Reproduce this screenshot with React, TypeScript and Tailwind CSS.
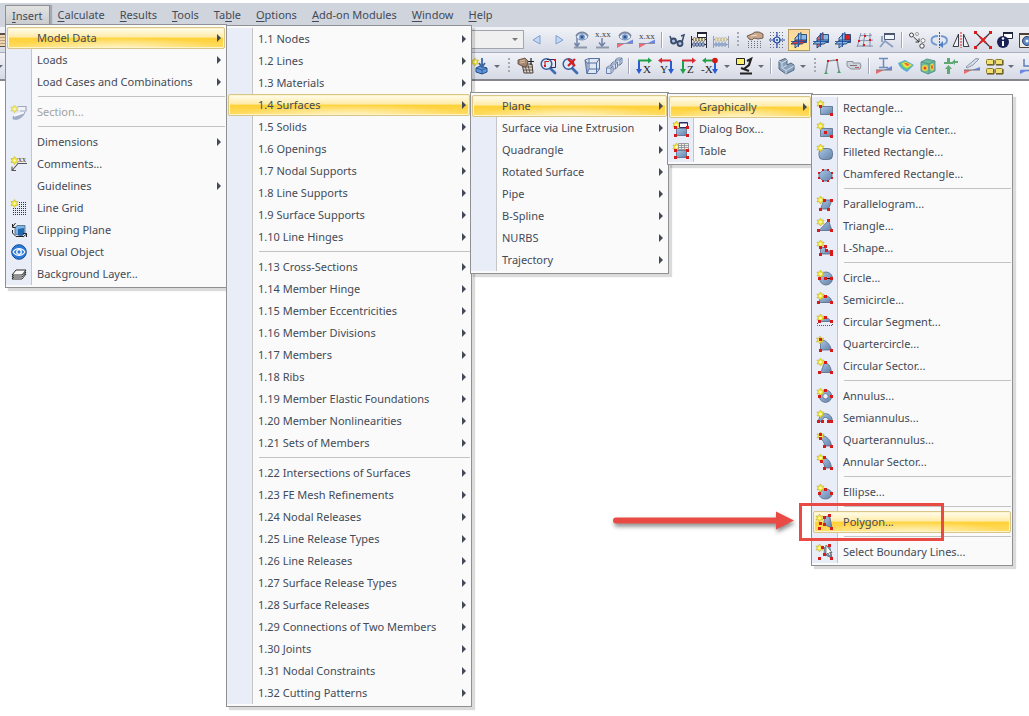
import React from "react";

const Star = ({ x = 4, y = 4 }: { x?: number; y?: number }) => (
  <g transform={`translate(${x} ${y})`}>
    <path
      d="M0 -4L1.2 -1.8L3.6 -2L2.2 0L3.6 2L1.2 1.8L0 4L-1.2 1.8L-3.6 2L-2.2 0L-3.6 -2L-1.2 -1.8Z"
      fill="#f7ee3a"
      stroke="#b8aa34"
      strokeWidth="0.6"
    />
    <circle r="1.1" fill="#fffbd0" />
  </g>
);

const Dots = ({ at, size = 3 }: { at: number[][]; size?: number }) => (
  <>
    {at.map(([x, y]) => (
      <rect key={`${x}-${y}`} x={Math.round(x - size / 2)} y={Math.round(y - size / 2)} width={size} height={size} fill="#d81a1a" />
    ))}
  </>
);

type Shape = { d: string; dots?: number[][]; star?: number[] | null; extra?: React.ReactNode };

const shapes: Record<string, Shape> = {
  rectangle: { d: "M3.5 6.5H15.5V14.5H3.5Z", dots: [[3.5, 6.5], [14.5, 14.5]] },
  rectCenter: { d: "M3.5 6.5H15.5V14.5H3.5Z", dots: [[8.5, 10.5], [14.5, 14.5]] },
  filleted: { d: "M6 4.5H11.5Q15.5 4.5 15.5 8.5V11.5Q15.5 15.5 11.5 15.5H6Q2 15.5 2 11.5V8.5Q2 4.5 6 4.5Z" },
  chamfered: {
    d: "M6 4H11L15 8V11L11 15H6L2 11V8Z",
    star: null,
    extra: <Dots size={2} at={[[6, 4], [11, 4], [15, 7], [15, 12], [11, 15], [6, 15], [2, 12], [2, 7]]} />,
  },
  parallelogram: { d: "M7 4H15L11.5 13H3.5Z", dots: [[7.5, 4.5], [14.5, 4.5], [3.5, 13.5], [11.5, 13.5]] },
  triangle: { d: "M11.5 2.5L15 12.5H2Z", dots: [[11.5, 2.5], [1.5, 12.5], [14.5, 12.5]] },
  lshape: { d: "M3.5 7.5H8.5V11H14.5V14H3.5Z", dots: [[3.5, 7.5], [8.5, 6.5], [9.5, 10.5], [14.5, 11.5], [3.5, 14.5], [14.5, 14.5]] },
  circle: {
    d: "M9 2A6.5 6.5 0 1 1 9 15A6.5 6.5 0 1 1 9 2Z",
    extra: <path d="M9 8.5H14" stroke="#111" strokeWidth="1" />,
    dots: [[2.5, 8.5], [8.5, 8.5], [14.5, 8.5]],
  },
  semicircle: { d: "M2 10.5A6.5 6.5 0 0 1 15 10.5Z", dots: [[1.5, 10.5], [8.5, 4.5], [14.5, 10.5]] },
  segment: {
    d: "M2.5 7.5Q8.5 0 14.5 7.5Z",
    dots: [[2.5, 7.5], [8.5, 3.5], [14.5, 7.5]],
    extra: <path d="M0.5 9V11.5H15.5V9" fill="none" stroke="#555" strokeDasharray="1 1" />,
  },
  quarter: { d: "M3.5 3.5C9 4 13 8 14.5 14H3.5Z", dots: [[3.5, 3.5], [3.5, 14.5], [14.5, 14.5]], star: [3, 4] },
  sector: { d: "M8.5 4.5C12 6 14 9 14.5 14.5H3C6 12 5 7 8.5 4.5Z", dots: [[8.5, 4.5], [2.5, 14.5], [14.5, 14.5]] },
  annulus: {
    d: "M8.5 2A6.2 6.2 0 1 1 8.5 14.4A6.2 6.2 0 1 1 8.5 2ZM8.5 5.5A2.7 2.7 0 1 0 8.5 11A2.7 2.7 0 1 0 8.5 5.5Z",
    dots: [[8.5, 2.5], [2.5, 8.5], [14.5, 8.5]],
  },
  semiannulus: { d: "M1.5 11.5C2 1 15 1 15.5 11.5H12C11 6 6 6 5 11.5Z", dots: [[1.5, 11.5], [5.5, 11.5], [11.5, 11.5], [14.5, 11.5]] },
  quarterannulus: { d: "M3.5 3C10 4 14 8 14.5 14H7.5C7.5 10 5.5 8 3.5 6.5Z", dots: [[3.5, 2.5], [3.5, 6.5], [7.5, 14.5], [14.5, 14.5]] },
  annularSector: { d: "M7.5 3.5C12 5 14 9 14.5 14H7.5C8 11 6.5 9 4.5 7.5Z", dots: [[7.5, 3.5], [4.5, 7.5], [7.5, 14.5], [14.5, 14.5]] },
  ellipse: { d: "M8.5 5A6.5 5 0 1 1 8.5 15A6.5 5 0 1 1 8.5 5Z", dots: [[2.5, 9.5], [8.5, 5.5], [14.5, 9.5]] },
  polygon: { d: "M7.5 3.5L12.5 1.5L15 14L7 10.5Z", star: [2.5, 4], dots: [[7.5, 3.5], [12.5, 1.5], [14.5, 14.5], [7.5, 10.5], [2.5, 14.5], [3.5, 9.5]] },
  boundary: {
    d: "M7.5 3.5L12.5 1.5L15 14L7 10.5Z",
    star: [2.5, 4],
    dots: [[5.5, 3.5], [12.5, 1.5], [14.5, 14.5], [7.5, 10.5], [2.5, 14.5]],
    extra: <path d="M9 1V11L11 9L12.5 12L14 11L12.5 8.5H15Z" fill="#fff" stroke="#555" strokeWidth="0.7" />,
  },
  dialog: {
    d: "M3.5 7.5H13.5V14.5H3.5Z",
    dots: [[2.5, 6.5], [14.5, 6.5], [2.5, 14.5], [14.5, 14.5]],
    extra: <path d="M6.5 1.5H14.5V6.5H6.5ZM6.5 2H14.5" fill="#fff" stroke="#2b2f66" />,
  },
  table: {
    d: "M3.5 7.5H13.5V14.5H3.5Z",
    dots: [[2.5, 7.5], [14.5, 7.5], [2.5, 14.5], [14.5, 14.5]],
    extra: <path d="M5.5 0.5H15.5V6.5H5.5ZM5.5 2.5H15.5M5.5 4.5H15.5M8.5 0.5V6.5M11.5 0.5V6.5" fill="#eee" stroke="#8a8a8a" strokeWidth="0.8" />,
  },
};

const drawings: Record<string, React.ReactNode> = {
  section: (
    <g opacity="0.75">
      <path d="M7 2.5H15V7H9" fill="#f4f6fb" stroke="#8b92a8" strokeWidth="1.2" />
      <path d="M2 12.5L8 11.5L14 8C13 12 9 15 5 15.5L2 15Z" fill="#8d9cbd" stroke="#6e7d9f" strokeWidth="0.6" />
      <path d="M3 12L13 8.5" stroke="#fff" strokeWidth="1.5" />
      <Star x={3.5} y={5} />
    </g>
  ),
  comments: (
    <>
      <text x="7" y="6" fontSize="8" fontFamily="Liberation Serif, serif" fill="#333">xx</text>
      <path d="M16 7.5H7L1.5 14M1 10.5V14.5H5" fill="none" stroke="#555" strokeWidth="1.1" />
      <Star x={3.5} y={4.5} />
    </>
  ),
  grid: (
    <>
      {[2.5, 4.5, 6.5, 8.5, 10.5, 12.5, 14.5].map((y) => (
        <path key={y} d={y < 8 ? `M8 ${y}H15` : `M2 ${y}H15`} stroke="#333" strokeDasharray="1 1" />
      ))}
      <Star x={3.5} y={3.5} />
    </>
  ),
  clipping: (
    <>
      <path d="M4 6L6 3.5H14V11L11 14L4 12Z" fill="#7db4e4" stroke="#4a6580" strokeWidth="0.8" />
      <path d="M7 7L13 6V12L10 14L7 13Z" fill="#2368ae" />
      <path d="M1.5 5L4.5 1M1.5 2V5.5H4.5M1.5 8V11L5 14.5H12M12 15L15.5 12M12 11.5H15.5V15" fill="none" stroke="#222" strokeWidth="1" />
    </>
  ),
  visual: (
    <>
      <circle cx="8" cy="8" r="7.3" fill="#2a7bd8" stroke="#134c9a" />
      <path d="M2 8C5 3.5 11 3.5 14 8C11 12.5 5 12.5 2 8Z" fill="none" stroke="#fff" strokeWidth="1.2" />
      <circle cx="8" cy="8" r="2.3" fill="none" stroke="#fff" strokeWidth="1.3" />
    </>
  ),
  layers: (
    <>
      {[13, 11, 9].map((y) => (
        <path key={y} d={`M1 ${y}L5 ${y - 5}H15L11 ${y}Z`} fill="#fafafa" stroke="#2c2c2c" strokeWidth="1" />
      ))}
    </>
  ),
};

const MenuIcon = ({ name }: { name: string }) => {
  const shape = shapes[name];
  return (
    <svg viewBox="0 0 16 16" className="size-4 shrink-0 overflow-visible" aria-hidden="true">
      <defs>
        <linearGradient id="steel" x1="0" y1="0" x2="1" y2="1">
          <stop offset="0" stopColor="#a9c6ea" />
          <stop offset="1" stopColor="#6482a6" />
        </linearGradient>
      </defs>
      {shape ? (
        <>
          <path d={shape.d} fill="url(#steel)" fillRule="evenodd" stroke="#536a86" strokeWidth="0.8" />
          {shape.star !== null && <Star x={shape.star?.[0] ?? 3.5} y={shape.star?.[1] ?? 4} />}
          {shape.extra}
          <Dots at={shape.dots ?? []} />
        </>
      ) : (
        drawings[name]
      )}
    </svg>
  );
};

type Item = {
  label: string;
  icon?: string;
  disabled?: boolean;
  arrow?: boolean;
  active?: boolean;
  submenu?: React.ReactNode;
  marked?: boolean;
};
type Entry = Item | "-";

const Callout = () => (
  <>
    <div className="pointer-events-none absolute -top-2 -left-3.5 h-[38px] w-[145px] border-3 border-[#ea4a44]" />
    <svg viewBox="0 0 186 30" className="pointer-events-none absolute -top-1 right-full mr-4 h-[30px] w-[186px] drop-shadow-[1px_3px_2px_rgba(0,0,0,0.45)]" aria-hidden="true">
      <path d="M5 13.5H168" stroke="#ea4a44" strokeWidth="6" strokeLinecap="round" />
      <path d="M165 4.5L183 13.5L165 22.5Z" fill="#ea4a44" />
    </svg>
  </>
);

const MenuRow = ({ item }: { item: Item }) => (
  <li className="relative" role="none">
    <button
      type="button"
      role="menuitem"
      disabled={item.disabled}
      className={`flex h-[22px] w-full items-center rounded-xs border pl-[3px] text-left ${
        item.active
          ? "border-[#d8c58a] bg-[radial-gradient(ellipse_48%_52%_at_50%_100%,#fff3c2,rgba(255,243,194,0)),linear-gradient(#fffdf0,#ffeba6_46%,#ffd136_50%,#ffdc66)] shadow-[inset_0_0_0_1px_#fff3c8]"
          : "border-transparent"
      } ${item.disabled ? "text-[#a0a0a0]" : "text-[#434a57]"}`}
    >
      {item.icon ? <MenuIcon name={item.icon} /> : <span className="w-4 shrink-0" />}
      <span className="ml-2.5 flex-1 whitespace-nowrap">{item.label}</span>
      {item.arrow && (
        <svg viewBox="0 0 4 8" className="mr-[3px] h-2 w-1" aria-hidden="true">
          <path d="M0 0L4 4L0 8Z" fill="#434a57" />
        </svg>
      )}
    </button>
    {item.submenu}
    {item.marked && <Callout />}
  </li>
);

const Menu = ({ entries, className, label }: { entries: Entry[]; className: string; label: string }) => (
  <div className={`absolute z-10 border border-[#8e9093] bg-[#fafafa] py-0.5 shadow-[3px_3px_1px_rgba(0,0,0,0.14)] ${className}`}>
    <ul role="menu" aria-label={label} className="bg-[linear-gradient(to_right,#e9edf7_25px,#c5c5c5_25px,#c5c5c5_26px,#fafafa_26px)] px-px">
      {entries.map((entry, i) =>
        entry === "-" ? (
          <li key={i} role="separator" className="h-2 pt-[3px] pl-[31px]">
            <span className="block h-px bg-[#c2c2c2]" />
          </li>
        ) : (
          <MenuRow key={i} item={entry} />
        )
      )}
    </ul>
  </div>
);

const sub = (labels: string[]): Item[] => labels.map((label) => ({ label, arrow: true }));

const graphicalEntries: Entry[] = [
  { label: "Rectangle...", icon: "rectangle" },
  { label: "Rectangle via Center...", icon: "rectCenter" },
  { label: "Filleted Rectangle...", icon: "filleted" },
  { label: "Chamfered Rectangle...", icon: "chamfered" },
  "-",
  { label: "Parallelogram...", icon: "parallelogram" },
  { label: "Triangle...", icon: "triangle" },
  { label: "L-Shape...", icon: "lshape" },
  "-",
  { label: "Circle...", icon: "circle" },
  { label: "Semicircle...", icon: "semicircle" },
  { label: "Circular Segment...", icon: "segment" },
  { label: "Quartercircle...", icon: "quarter" },
  { label: "Circular Sector...", icon: "sector" },
  "-",
  { label: "Annulus...", icon: "annulus" },
  { label: "Semiannulus...", icon: "semiannulus" },
  { label: "Quarterannulus...", icon: "quarterannulus" },
  { label: "Annular Sector...", icon: "annularSector" },
  "-",
  { label: "Ellipse...", icon: "ellipse" },
  "-",
  { label: "Polygon...", icon: "polygon", active: true, marked: true },
  "-",
  { label: "Select Boundary Lines...", icon: "boundary" },
];

const planeEntries: Entry[] = [
  {
    label: "Graphically",
    arrow: true,
    active: true,
    submenu: <Menu label="Graphically" entries={graphicalEntries} className="-top-0.5 left-full w-[202px]" />,
  },
  { label: "Dialog Box...", icon: "dialog" },
  { label: "Table", icon: "table" },
];

const surfaceEntries: Entry[] = [
  {
    label: "Plane",
    arrow: true,
    active: true,
    submenu: <Menu label="Plane" entries={planeEntries} className="-top-0.5 left-full w-[146px]" />,
  },
  ...sub(["Surface via Line Extrusion", "Quadrangle", "Rotated Surface", "Pipe", "B-Spline", "NURBS", "Trajectory"]),
];

const modelEntries: Entry[] = [
  ...sub(["1.1 Nodes", "1.2 Lines", "1.3 Materials"]),
  {
    label: "1.4 Surfaces",
    arrow: true,
    active: true,
    submenu: <Menu label="Surfaces" entries={surfaceEntries} className="-top-0.5 left-full w-[199px]" />,
  },
  ...sub(["1.5 Solids", "1.6 Openings", "1.7 Nodal Supports", "1.8 Line Supports", "1.9 Surface Supports", "1.10 Line Hinges"]),
  "-",
  ...sub([
    "1.13 Cross-Sections",
    "1.14 Member Hinge",
    "1.15 Member Eccentricities",
    "1.16 Member Divisions",
    "1.17 Members",
    "1.18 Ribs",
    "1.19 Member Elastic Foundations",
    "1.20 Member Nonlinearities",
    "1.21 Sets of Members",
  ]),
  "-",
  ...sub([
    "1.22 Intersections of Surfaces",
    "1.23 FE Mesh Refinements",
    "1.24 Nodal Releases",
    "1.25 Line Release Types",
    "1.26 Line Releases",
    "1.27 Surface Release Types",
    "1.28 Surface Releases",
    "1.29 Connections of Two Members",
    "1.30 Joints",
    "1.31 Nodal Constraints",
    "1.32 Cutting Patterns",
  ]),
];

const insertEntries: Entry[] = [
  {
    label: "Model Data",
    arrow: true,
    active: true,
    submenu: <Menu label="Model Data" entries={modelEntries} className="-top-0.5 left-full ml-px w-[246px]" />,
  },
  ...sub(["Loads", "Load Cases and Combinations"]),
  "-",
  { label: "Section...", icon: "section", disabled: true },
  "-",
  { label: "Dimensions", arrow: true },
  { label: "Comments...", icon: "comments" },
  { label: "Guidelines", arrow: true },
  { label: "Line Grid", icon: "grid" },
  { label: "Clipping Plane", icon: "clipping" },
  { label: "Visual Object", icon: "visual" },
  { label: "Background Layer...", icon: "layers" },
];

// [text before the access key, access key, rest]
const menuBar = [
  ["", "C", "alculate"],
  ["", "R", "esults"],
  ["", "T", "ools"],
  ["Ta", "b", "le"],
  ["", "O", "ptions"],
  ["", "A", "dd-on Modules"],
  ["", "W", "indow"],
  ["", "H", "elp"],
];

// Toolbar drawings on an 18 x 18 grid
const Eye = ({ x, y }: { x: number; y: number }) => (
  <g transform={`translate(${x} ${y})`}>
    <path d="M-6 0C-3 -5 3 -5 6 0C3 4 -3 4 -6 0Z" fill="#e6edf6" stroke="#8795ae" />
    <path d="M-6 -1C-3 -6 3 -6 6 -1" fill="none" stroke="#7a87a0" strokeWidth="1.5" />
    <circle r="2.8" fill="#5c86c4" />
    <circle r="1" fill="#27406e" />
  </g>
);

const Wedge = () => (
  <>
    <path d="M1 17V12.5H9Z" fill="#ee6a72" />
    <path d="M17 8.5V12.5H9Z" fill="#6c86e6" />
    <path d="M1 12.5H17" stroke="#8c8fa3" />
  </>
);

const Abacus = () => (
  <>
    <path d="M1.5 5V17M16.5 5V17" stroke="currentColor" strokeWidth="1" />
    <path d="M2 8.5H16M2 13.5H16" stroke="currentColor" />
    {[4, 7, 10, 13].map((x) => (
      <g key={x} fill="#8fabd8" stroke="currentColor" strokeWidth="0.5">
        <ellipse cx={x + 0.5} cy="8.5" rx="1.5" ry="2" fill="#efe2a4" />
        <ellipse cx={x} cy="13.5" rx="1.5" ry="2" />
      </g>
    ))}
  </>
);

const GridDots = ({ rows }: { rows: number[] }) => (
  <>
    {rows.map((y) => (
      <path key={y} d={`M2 ${y}.5H17`} stroke="#6c7380" strokeDasharray="1 2" />
    ))}
  </>
);

const Planes = ({ fills }: { fills: string[] }) => (
  <g stroke="#1d4474" strokeWidth="0.9">
    <path d="M8 3.5H16.5V11.5H8Z" fill={fills[0]} />
    <path d="M5 7L11 1.5V12L5 17Z" fill={fills[1]} fillOpacity="0.85" />
    <path d="M1 13L6 9H17L12 13Z" fill={fills[2]} fillOpacity="0.9" />
    <path d="M8.5 2V16M1 10.5H17" stroke="#1b4fa0" />
  </g>
);

const Axis = ({ letter, color, turn, side }: { letter: string; color: string; turn?: boolean; side: string }) => (
  <>
    <path d={turn ? "M4 3.5H14" : "M3 3.5H14"} stroke={color} strokeWidth="2" />
    <path d={turn ? "M5 0.5L1 3.5L5 6.5" : "M13 0.5L17 3.5L13 6.5"} fill={color} />
    <path d={turn ? "M14 4V14" : "M4 4V14"} stroke={side} strokeWidth="2" />
    <path d={turn ? "M11 12H17L14 17Z" : "M1 12H7L4 17Z"} fill={side} />
    <text x={turn ? (letter.length > 1 ? 0 : 3) : 8} y="16" fontSize="11" fontFamily="Liberation Serif, serif" fill="#1c1c28">
      {letter}
    </text>
  </>
);

const Lens = () => (
  <>
    <path d="M11 11L16 16" stroke="#3f6cb4" strokeWidth="2.8" strokeLinecap="round" />
    <circle cx="7.5" cy="7" r="5.3" fill="#dcebfb" stroke="#3b5c9a" strokeWidth="1.5" />
  </>
);

const windowTiles = [[1, 2], [10, 2], [1, 11], [10, 11]];

const tools: Record<string, React.ReactNode> = {
  Back: <path d="M12 4.5V13L5 9Z" fill="#c3d8f3" stroke="#7d9fd0" />,
  Forward: <path d="M6 4.5V13L13 9Z" fill="#c3d8f3" stroke="#7d9fd0" />,
  "Show loads": (
    <>
      <path d="M5 5V15M2.5 12L5 15.5L7.5 12" fill="none" stroke="#6f82a8" strokeWidth="1.5" />
      <path d="M2 16.5H15" stroke="#8f98ab" strokeWidth="2" />
      <Eye x={10} y={6} />
    </>
  ),
  "Load values": (
    <>
      <text x="1" y="6" fontSize="9" fontFamily="Liberation Serif, serif" fill="#3c4049">x.xx</text>
      <path d="M8 7V14M5 11.5L8 15L11 11.5" fill="none" stroke="#6f82a8" strokeWidth="1.5" />
      <path d="M2 16.5H15" stroke="#8f98ab" strokeWidth="2" />
    </>
  ),
  "Show results": <><Wedge /><Eye x={9} y={6} /></>,
  "Result values": (
    <>
      <Wedge />
      <text x="1" y="8" fontSize="9" fontFamily="Liberation Serif, serif" fill="#3c4049">x.xx</text>
    </>
  ),
  Glasses: (
    <>
      <circle cx="5.5" cy="10" r="2.5" fill="#a9c1e6" stroke="#3a4a68" strokeWidth="1.8" />
      <circle cx="12" cy="12.5" r="2.5" fill="#a9c1e6" stroke="#3a4a68" strokeWidth="1.8" />
      <path d="M3 8L2 5M8 10.5L10 11.5M14 11L16 4L13 5" fill="none" stroke="#3a4a68" strokeWidth="1.5" />
    </>
  ),
  "Table settings": <g color="#26283a"><Abacus /><path d="M7.5 1.5H16.5V6.5H7.5Z" fill="#fff" stroke="#1f2333" /><path d="M7 2H17" stroke="#1f2333" strokeWidth="2" /></g>,
  Tables: <g color="#98a0b0"><Abacus /></g>,
  "Set grid": <><GridDots rows={[10, 12, 14, 16]} /><path d="M1 5L6 3L9 1H13L17 3V7L12 8L8 7L6 9L3 8Z" fill="#c9a78a" stroke="#54453a" strokeWidth="0.8" /><path d="M5 5L11 4" stroke="#f0dcc8" /></>,
  Snap: (
    <>
      <GridDots rows={[1, 4, 7, 10, 13, 16]} />
      <path d="M9 1V17M1 9H17" stroke="#2b4fae" strokeWidth="1.2" />
      <circle cx="9" cy="9" r="3" fill="#dce8fb" stroke="#1b41a2" strokeWidth="1.2" />
      <circle cx="9" cy="9" r="1" fill="#1b41a2" />
    </>
  ),
  "Work plane XY": <Planes fills={["#8db9e6", "#9cc4ec", "#e23a3a"]} />,
  "Work plane YZ": <Planes fills={["#8db9e6", "#e05050", "#8db9e6"]} />,
  "Work plane XZ": <Planes fills={["#e02020", "#9cc4ec", "#8db9e6"]} />,
  "Curved grid": (
    <>
      <path d="M5 2C3 7 3 11 1 16M9 2C8 7 8 11 7 16M14 2V16M4 5C8 3 11 6 16 4M3 10C8 8 11 11 17 9M1 15H17" stroke="#8191ad" fill="none" />
      <Dots at={[[9, 5], [14, 9], [8, 14], [3, 10]]} size={2} />
    </>
  ),
  "Object snap": (
    <>
      <path d="M6.5 2.5H16.5V8.5H6.5Z" fill="#f3f6fb" stroke="#4d566c" /><path d="M6 3H17" stroke="#4d566c" strokeWidth="2" />
      <path d="M2 16L7 10L15 16M4 5V11" fill="none" stroke="#8b9fc2" strokeWidth="1.8" />
    </>
  ),
  Copy: (
    <>
      <circle cx="3.5" cy="4" r="2" fill="#fff" stroke="#444" /><circle cx="9" cy="3" r="1.5" fill="#fff" stroke="#999" />
      <circle cx="14" cy="15" r="2.2" fill="#fff" stroke="#444" /><circle cx="15" cy="9.5" r="2" fill="#fff" stroke="#888" />
      <path d="M5.5 6L11 11M11 7.5V11H7.5" fill="none" stroke="#333" />
    </>
  ),
  Rotate: (
    <>
      <path d="M7 14C-1 12 0 5 8 5M11 5C19 6 19 13 11 14" fill="none" stroke="#6f98d4" strokeWidth="1.8" />
      <path d="M13 10V17L9 14Z" fill="#4f80c8" /><path d="M9.5 1V17" stroke="#d22" strokeDasharray="2 1" />
    </>
  ),
  Mirror: <><path d="M6.5 3V15.5H1ZM11.5 3V15.5H17Z" fill="#eef0f5" stroke="#3a3d46" /><path d="M9 1V17" stroke="#d22" strokeDasharray="2 1" /></>,
  Divide: <><path d="M2 2L16 16M16 2L2 16" stroke="#333" strokeWidth="1.2" /><path d="M6 6L12 12M12 6L6 12" stroke="#e02020" strokeWidth="1.8" /><Dots at={[[1.5, 1.5], [16.5, 1.5], [1.5, 16.5], [16.5, 16.5]]} /></>,
  Info: (
    <>
      <path d="M7.5 1.5H16.5V7.5H7.5Z" fill="#fff" stroke="#20263a" /><path d="M7 2H17" stroke="#20263a" strokeWidth="2" />
      <circle cx="7" cy="11" r="6" fill="#1a2358" /><path d="M7 10V15" stroke="#fff" strokeWidth="2" /><circle cx="7" cy="7.5" r="1.2" fill="#fff" />
    </>
  ),
  Settings: <><path d="M1.5 2.5H17V16.5H1.5Z" fill="#f2efe6" stroke="#4a4238" /><path d="M1 3H17" stroke="#4a4238" strokeWidth="2" /><circle cx="9" cy="10" r="4.5" fill="#5f87c6" stroke="#24406e" /><circle cx="9" cy="10" r="1.5" fill="#fff" /></>,
  "New load": (
    <>
      <path d="M5 11L9 9L16 11V15L11 17L5 15Z" fill="#5f96dc" stroke="#274f86" /><path d="M5 11L11 13L16 11M11 13V17" fill="none" stroke="#274f86" strokeWidth="0.8" />
      <path d="M11 1V9M8 6L11 10L14 6" fill="none" stroke="#3f679f" strokeWidth="1.8" /><Star x={4} y={5} />
    </>
  ),
  Pan: (
    <>
      <path d="M5 7H15L16 16H7Z" fill="#ddd6cf" stroke="#4a4038" /><path d="M8 8L10 16M11 8L13 16M6 10H16M6 13H16" stroke="#4a4038" strokeWidth="0.8" />
      <path d="M1 3L8 1L11 4L10 9L8 10L5 9L1 7Z" fill="#a2856e" stroke="#5c4536" strokeWidth="0.8" /><path d="M3 4L8 3M3 6L8 5" stroke="#dcc2ab" />
      <path d="M14 1V8M11 4.5H17" stroke="#222" strokeWidth="1.2" />
    </>
  ),
  "Zoom window": <><Lens /><path d="M8 2.5H16.5V10.5H12" fill="none" stroke="#25315b" /><path d="M6 9V4.5H10" fill="none" stroke="#c22" strokeWidth="1.2" /><Dots at={[[6, 9], [16, 3]]} size={2} /></>,
  "Zoom all": <><Lens /><path d="M7 2L14 9M14 2L7 9" stroke="#d51f1f" strokeWidth="2.2" /></>,
  Isometric: <path d="M2 3L6 1.5H16.5V12L13 16.5H4ZM2 3L4 6H13.5V16.5M4 6V16.5M13.5 6L16.5 1.5M6 1.5V12H16.5M6 12L4 16.5" fill="#dfe7f3" stroke="#5773a2" />,
  Views: (
    <g fill="#dbe4f2" stroke="#6b81a8">
      <path d="M10.5 3L12.5 1H17V6L15 8H10.5ZM10.5 3H15V8M15 3L17 1" />
      <path d="M6 7L8 5H12.5V10L10.5 12H6ZM6 7H10.5V12M10.5 7L12.5 5" />
      <path d="M1.5 11L3.5 9H8V14.5L6 16.5H1.5ZM1.5 11H6V16.5M6 11L8 9" />
    </g>
  ),
  "View X": <Axis letter="X" color="#23a04a" side="#2a5bd0" />,
  "View Y": <Axis letter="Y" color="#d82a32" side="#2a5bd0" turn />,
  "View Z": <Axis letter="Z" color="#d82a32" side="#23a04a" />,
  "View -X": <><Axis letter="-X" color="#23a04a" side="#2a5bd0" turn /><circle cx="14" cy="3.5" r="2.8" fill="#d61a1a" /></>,
  Render: (
    <>
      <path d="M1.5 1.5H9.5V7.5H1.5Z" fill="#fbf26a" stroke="#222" /><path d="M12 4L16 2L14 8L9 12" fill="none" stroke="#222" strokeWidth="2.2" />
      <path d="M5 16.5H17M6 11L14 14" stroke="#222" strokeWidth="2.2" />
    </>
  ),
  Solid: (
    <>
      <path d="M2 4L8 1.5L10 3V8L14 6L17 8V13L9 17L2 12Z" fill="#8aa2bb" stroke="#52677f" />
      <path d="M2 4L5 6V11L9 13.5L17 9M5 6L10 3M9 13.5V17M10 8L6 10.5" fill="none" stroke="#d0dcea" />
    </>
  ),
  Frame: <><path d="M3 15L5 4L14 3L16 14" fill="none" stroke="#8a93a4" strokeWidth="1.5" /><Dots at={[[5, 4], [14, 3]]} size={2} /><path d="M1 17L3 14L5 17ZM14 16L16 13L18 16Z" fill="#49a66b" /></>,
  Measure: <><path d="M2 4.5H8V6H15Q17 9 15 12H6L2 9Z" fill="#cfd4dc" stroke="#8b929e" /><path d="M5 8.5H12" stroke="#777" /><path d="M10 10.5H14" stroke="#c55" /></>,
  Section: <><path d="M4 1.5H13M8.5 2V10M4 10.5H13" stroke="#6d8cbd" strokeWidth="1.5" /><path d="M1 17V13H9Z" fill="#ee6a72" /><path d="M17 9V13H9Z" fill="#6c86e6" /><path d="M1 13H17" stroke="#777" /></>,
  Surface: <><path d="M1 6L8 3L17 8L10 15Q3 12 1 6Z" fill="#5aa7e0" /><path d="M3 6L8 4L16 8L10 13Q4 11 3 6Z" fill="#66cf6b" /><path d="M5 6L9 5L15 8L10 11Q6 10 5 6Z" fill="#f2dc48" /><path d="M7 6L10 6L13 8L10 9Z" fill="#ea6d38" /></>,
  Volume: <><path d="M2 5L8 2L16 4V14L9 17L2 14Z" fill="#6cc08e" stroke="#5b8f9a" /><path d="M2 5L10 7V17M10 7L16 4" stroke="#5b8f9a" fill="none" /><circle cx="6" cy="11" r="3" fill="#f2d442" /><circle cx="6" cy="11" r="1.5" fill="#e5432a" /><ellipse cx="13" cy="10" rx="1.8" ry="3.5" fill="#f2d442" /><ellipse cx="13" cy="10" rx="0.8" ry="2" fill="#e5432a" /></>,
  Supports: <g fill="#5fa873"><path d="M6 1H9V5H12V7H3V5H6Z" /><path d="M17 4V6H14V8L11 5L14 2V4Z" /><path d="M7.5 8L11 12H9V17H6V12H4Z" /></g>,
  Beam: <><path d="M3 10L13 1.5L16 2L10 8L4 11Z" fill="#d5dce7" stroke="#8e99ac" /><path d="M1 17V13H9Z" fill="#ee6a72" /><path d="M17 10V13H9Z" fill="#6c86e6" /><path d="M1 13H17" stroke="#777" /></>,
  Windows: (
    <>
      {windowTiles.map(([x, y]) => (
        <g key={`${x}-${y}`}>
          <rect x={x + 0.5} y={y + 0.5} width="7" height="5" rx="1" fill="#f2df72" stroke="#8d7c2c" />
          <path d={`M${x + 1} ${y + 6}H${x + 8}V${y + 1}`} fill="none" stroke="#4d4416" />
        </g>
      ))}
    </>
  ),
  Diagram: <><path d="M5 2V9H15M2 13.5H17" stroke="#5e80b5" strokeWidth="1.5" fill="none" /><path d="M1 17V13H9Z" fill="#6c86e6" /></>,
};

const rowOne = [
  "Back", "Forward", "Show loads", "Load values", "Show results", "Result values", "|",
  "Glasses", "Table settings", "Tables", ":",
  "Set grid", "Snap", "Work plane XY", "Work plane YZ", "Work plane XZ", "Curved grid", "Object snap", "|",
  "Copy", "Rotate", "Mirror", "Divide", "Info", "Settings",
];

const rowTwo = [
  "New load", "v", ":", "Pan", "Zoom window", "Zoom all", "Isometric", "Views", "|",
  "View X", "View Y", "View Z", "View -X", "v", "Render", "v", "|", "Solid", "v", ":",
  "Frame", "Measure", "|", "Section", "Surface", "Volume", "Supports", "Beam", "Windows", "v", "Diagram",
];

const ToolStrip = ({ items }: { items: string[] }) => (
  <>
    {items.map((name, i) => {
      if (name === "|") return <span key={i} className="mx-[3px] box-content h-4 w-px shrink-0 border-r border-white bg-[#a0a6b4]" />;
      if (name === ":")
        return <span key={i} className="mx-[5px] h-4 w-0.5 shrink-0 bg-[repeating-linear-gradient(#a4aab8_0_2px,transparent_2px_4px)]" />;
      if (name === "v")
        return (
          <button key={i} type="button" aria-label="More" className="flex w-3 shrink-0 justify-center">
            <svg viewBox="0 0 6 3" className="h-[3px] w-1.5"><path d="M0 0H6L3 3Z" fill="#666d7a" /></svg>
          </button>
        );
      return (
        <button
          key={i}
          type="button"
          aria-label={name}
          className={`flex h-[22px] w-[22px] shrink-0 items-center justify-center ${
            name === "Work plane XY" ? "border border-[#b59a62] bg-linear-to-b from-[#fbd79e] to-[#ffe79a]" : ""
          }`}
        >
          <svg viewBox="0 0 18 18" className="size-[18px] shrink-0 overflow-visible" aria-hidden="true">{tools[name]}</svg>
        </button>
      );
    })}
  </>
);

const App: React.FC = () => {
  return (
    <div className="min-h-screen overflow-hidden bg-white pt-[3px] font-['Noto_Sans',sans-serif] text-[11px] leading-4 text-[#434a57]">
      <nav className="relative flex h-6 items-center gap-px bg-[#d0d4dd] pl-[5px]" aria-label="Main menu">
        <div className="relative mt-0.5 self-start">
          <button type="button" className="block h-5 border border-b-0 border-[#8e9093] bg-linear-to-b from-[#e3e3e3] to-[#c9cacc] px-1.5 shadow-[2px_0_1px_rgba(0,0,0,0.2)]">
            <span className="underline underline-offset-2">I</span>nsert
          </button>
          <Menu label="Insert" entries={insertEntries} className="top-[19px] left-0 w-[222px]" />
        </div>
        {menuBar.map(([before, key, after]) => (
          <button key={after} type="button" className="px-[7px] whitespace-nowrap">
            {before}
            <span className="underline underline-offset-2">{key}</span>
            {after}
          </button>
        ))}
      </nav>

      <header className="border-b-2 border-[#85878d] bg-[#cfd4de]">
        <div className="flex h-[26px] items-center border-b border-[#a9afbc] bg-linear-to-b from-[#f1f3f8] to-[#d6dae5]">
          <div className="flex h-5 w-[524px] shrink-0 items-center">
            <span className="h-3.5 w-[5px] shrink-0 border-t-2 border-b border-[#5a5048] bg-[repeating-linear-gradient(#f0d6b0_0_2px,#b79f80_2px_3px)]" />
            <select aria-label="Load case" className="ml-auto h-[19px] w-[120px] appearance-none border border-[#a2a5ab] bg-[#f0f0f0]" />
            <svg viewBox="0 0 6 3" className="pointer-events-none -ml-3 mr-1.5 h-[3px] w-1.5" aria-hidden="true">
              <path d="M0 0H6L3 3Z" fill="#777" />
            </svg>
          </div>
          <span className="w-0.5 shrink-0" />
          <ToolStrip items={rowOne} />
        </div>
        <div className="flex h-[26px] items-center bg-linear-to-b from-[#f1f3f8] to-[#d6dae5]">
          <span className="w-[469px] shrink-0">
            <svg viewBox="0 0 3 3" className="size-[3px]" aria-hidden="true">
              <path d="M0 0H3L0 3Z" fill="#666d7a" />
            </svg>
          </span>
          <ToolStrip items={rowTwo} />
        </div>
      </header>
    </div>
  );
};

export default App;
